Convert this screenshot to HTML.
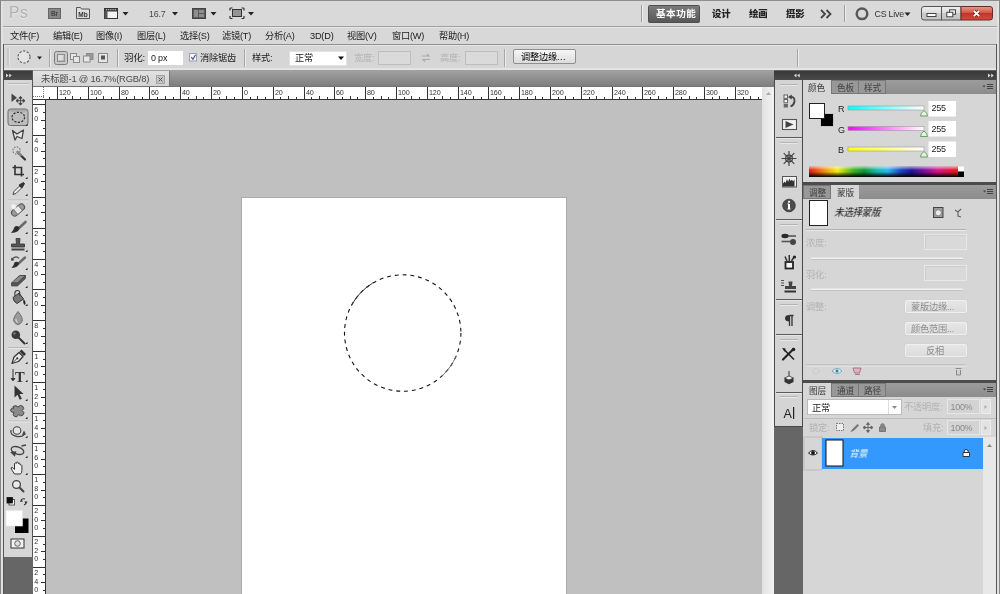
<!DOCTYPE html>
<html><head><meta charset="utf-8"><title>Photoshop</title>
<style>
*{box-sizing:border-box;margin:0;padding:0}
html,body{width:1000px;height:594px;overflow:hidden;background:#666}
body{font-family:"Liberation Sans","Noto Sans CJK SC",sans-serif;font-size:9px;color:#111;position:relative}
.a{position:absolute}
.t{position:absolute;white-space:nowrap;line-height:12px;height:12px;letter-spacing:-0.2px}
.dis{color:#b2b2b2 !important}
.o{top:52px;font-size:9.200px;color:#1a1a1a}
.p{font-size:9.200px}
.bd{font-weight:bold}
.btn.g{border-color:#f0f0f0;background:linear-gradient(#e6e6e6,#dcdcdc);box-shadow:0 0 0 .5px #cfcfcf}
.m{top:30px;font-size:9.200px;color:#1a1a1a}
.sep{position:absolute;width:2px;border-left:1px solid #a6a6a6;border-right:1px solid #ececec}
.box{position:absolute;border:1px solid #bdbdbd;background:#dadada}
.btn{position:absolute;border:1px solid #8e8e8e;border-radius:2px;background:linear-gradient(#f6f6f6,#dcdcdc);text-align:center}
svg{overflow:visible}
svg.a,.t{will-change:transform}
</style></head><body>

<!-- ===== application bar ===== -->
<div class="a" id="appbar" style="left:0;top:0;width:1000px;height:26px;background:#d9d9d9;border-top:1px solid #8e8e8e"></div>
<div class="a" style="left:0;top:26px;width:1000px;height:1px;background:#a0a0a0"></div>
<!-- ===== menu bar ===== -->
<div class="a" id="menubar" style="left:0;top:27px;width:1000px;height:17px;background:#d8d8d8;border-top:1px solid #e6e6e6"></div>
<div class="a" style="left:0;top:44px;width:1000px;height:1px;background:#8e8e8e"></div>
<!-- ===== options bar ===== -->
<div class="a" id="optbar" style="left:0;top:45px;width:1000px;height:25px;background:#d6d6d6;border-top:1px solid #e6e6e6;border-bottom:2px solid #e4e4e4"></div>

<!-- app bar content -->
<div class="t" style="left:9px;top:2.500px;font-size:15.600px;line-height:20px;height:20px;color:#b0b0b0;text-shadow:0 1px 0 #ececec;letter-spacing:0.700px">Ps</div>
<svg class="a" style="left:0;top:0" width="1000" height="46" viewBox="0 0 1000 46">
 <!-- Br -->
 <rect x="48.500" y="8.500" width="12" height="10" fill="#878787" stroke="#666"/>
 <text x="54.5" y="16.4" font-size="6.5" font-weight="bold" text-anchor="middle" fill="#444" font-family="Liberation Sans">Br</text>
 <!-- Mb -->
 <path d="M76.500 18.500V7.500h4l1 1.500h8V18.500z" fill="#dedede" stroke="#555"/>
 <text x="83" y="16.600" font-size="6.5" font-weight="bold" text-anchor="middle" fill="#333" font-family="Liberation Sans">Mb</text>
 <!-- screen/window icon -->
 <rect x="104.500" y="8.500" width="13" height="10" fill="#f2f2f2" stroke="#333"/>
 <rect x="104.500" y="8.500" width="13" height="2.500" fill="#444" stroke="#333"/>
 <rect x="104.500" y="11" width="3" height="7.500" fill="#555"/><path d="M106 9.700h11" stroke="#ddd" stroke-width="1" stroke-dasharray="1 1.200"/>
 <path d="M122.500 12h6l-3 3.500z" fill="#222"/>
 <!-- zoom -->
 <text x="149" y="17" font-size="8.800" fill="#4a4a4a" font-family="Liberation Sans" letter-spacing="-0.2">16.7</text>
 <path d="M172 12h6l-3 3.500z" fill="#222"/>
 <!-- arrange docs -->
 <rect x="192.500" y="8.500" width="13" height="10" fill="#5a5a5a" stroke="#444"/>
 <rect x="194" y="10" width="4" height="7" fill="#8e8e8e"/><rect x="199" y="10" width="5" height="3" fill="#8e8e8e"/><rect x="199" y="14" width="5" height="3" fill="#8e8e8e"/>
 <path d="M210.500 12h6l-3 3.500z" fill="#222"/>
 <!-- screen mode -->
 <rect x="232.500" y="9.500" width="9" height="7" fill="#949494" stroke="#333"/>
 <path d="M230 8h2.500M230 8v2.500M244 8h-2.500M244 8v2.500M230 18.500h2.500M230 18.500v-2.500M244 18.500h-2.500M244 18.500v-2.500" stroke="#333" stroke-width="1.200" fill="none"/>
 <path d="M248 12h6l-3 3.500z" fill="#222"/>
 <!-- separators -->
 <rect x="641" y="5" width="1" height="17" fill="#9c9c9c"/><rect x="642" y="5" width="1" height="17" fill="#ededed"/>
 <rect x="844" y="5" width="1" height="17" fill="#9c9c9c"/><rect x="845" y="5" width="1" height="17" fill="#ededed"/>
 <!-- workspace button -->
 <defs><linearGradient id="wsb" x1="0" y1="0" x2="0" y2="1"><stop offset="0" stop-color="#7c7c7c"/><stop offset="1" stop-color="#565656"/></linearGradient></defs><rect x="648.500" y="5.500" width="51" height="17" rx="1" fill="url(#wsb)" stroke="#4e4e4e"/>
 <!-- >> -->
 <path d="M821 10l4 4-4 4M826.500 10l4 4-4 4" stroke="#444" stroke-width="1.800" fill="none"/>
 <!-- CS Live -->
 <circle cx="862" cy="13.800" r="5.300" fill="none" stroke="#585858" stroke-width="2.500"/>
 <text x="874.500" y="17.200" font-size="8.900" fill="#333" font-family="Liberation Sans" letter-spacing="-0.25">CS Live</text>
 <path d="M904.500 12.500h6l-3 3.500z" fill="#222"/>
 <!-- window buttons -->
 <defs><linearGradient id="wb" x1="0" y1="0" x2="0" y2="1"><stop offset="0" stop-color="#f0f0f0"/><stop offset=".45" stop-color="#dcdcdc"/><stop offset=".5" stop-color="#cacaca"/><stop offset="1" stop-color="#c4c4c4"/></linearGradient>
 <linearGradient id="wc" x1="0" y1="0" x2="0" y2="1"><stop offset="0" stop-color="#e89a8c"/><stop offset=".45" stop-color="#d4584a"/><stop offset=".5" stop-color="#c43226"/><stop offset="1" stop-color="#d24e3c"/></linearGradient></defs>
 <path d="M924 6.500h17.500v13.500h-17.500a2.500 2.500 0 0 1-2.500-2.500v-8.500a2.500 2.500 0 0 1 2.500-2.500z" fill="url(#wb)" stroke="#555"/>
 <rect x="941.500" y="6.500" width="19.500" height="13.500" fill="url(#wb)" stroke="#555"/>
 <path d="M961 6.500h29a2.500 2.500 0 0 1 2.500 2.500v8.500a2.500 2.500 0 0 1-2.500 2.500h-29z" fill="url(#wc)" stroke="#6a2a24"/>
 <rect x="927" y="13.500" width="9" height="3" fill="#fff" stroke="#444"/>
 <rect x="949.500" y="9.800" width="6" height="4.500" fill="#eee" stroke="#444"/><rect x="946.800" y="12.300" width="6" height="4.500" fill="#fff" stroke="#444"/>
 <path d="M973.800 10.800l5.400 5.400M979.200 10.800l-5.400 5.400" stroke="#5a2a26" stroke-width="3.200"/><path d="M973.800 10.800l5.400 5.400M979.200 10.800l-5.400 5.400" stroke="#fff" stroke-width="1.900"/>
</svg>
<div class="t bd" style="left:655.500px;top:8px;font-size:9.600px;color:#fff;letter-spacing:0.500px">基本功能</div>
<div class="t bd" style="left:712px;top:8px;font-size:9.400px;color:#222"><b>设计</b></div>
<div class="t bd" style="left:749px;top:8px;font-size:9.400px;color:#222"><b>绘画</b></div>
<div class="t bd" style="left:786px;top:8px;font-size:9.400px;color:#222"><b>摄影</b></div>

<!-- menu bar content -->
<div class="t m" style="left:10px">文件(F)</div>
<div class="t m" style="left:53px">编辑(E)</div>
<div class="t m" style="left:96px">图像(I)</div>
<div class="t m" style="left:137px">图层(L)</div>
<div class="t m" style="left:180px">选择(S)</div>
<div class="t m" style="left:222px">滤镜(T)</div>
<div class="t m" style="left:265px">分析(A)</div>
<div class="t m" style="left:310px">3D(D)</div>
<div class="t m" style="left:347px">视图(V)</div>
<div class="t m" style="left:392px">窗口(W)</div>
<div class="t m" style="left:439px">帮助(H)</div>

<!-- ===== workspace ===== -->
<div class="a" id="ws" style="left:0;top:70px;width:1000px;height:524px;background:#666"></div>
<!-- left edge -->
<div class="a" style="left:0;top:0;width:1px;height:594px;background:#858585"></div>
<div class="a" style="left:1px;top:1px;width:2px;height:593px;background:#e2e2e2;z-index:6"></div>
<div class="a" style="left:3px;top:44px;width:1px;height:550px;background:#555;z-index:6"></div>

<!-- ===== toolbar ===== -->
<div class="a" id="tools" style="left:4px;top:71px;width:29px;height:486px;background:#d6d6d6;border-right:1px solid #555"></div>
<div class="a" style="left:4px;top:71px;width:28px;height:9px;background:linear-gradient(#3b3b3b,#4c4c4c)"></div>

<!-- ===== document window ===== -->
<div class="a" id="tabbar" style="left:33px;top:70px;width:741px;height:17px;background:linear-gradient(#a2a2a2,#7c7c7c)"></div>
<div class="a" id="tab" style="left:33px;top:71px;width:137px;height:16px;background:linear-gradient(#e2e2e2,#d2d2d2);border-right:1px solid #777"></div>
<div class="a" id="canvas" style="left:46px;top:100px;width:716px;height:494px;background:#c0c0c0"></div>
<div class="a" id="doc" style="left:241px;top:197px;width:326px;height:400px;background:#fff;border:1px solid #acacac"></div>
<div class="a" id="hruler" style="left:33px;top:86px;width:729px;height:14px;background:#fff;border-bottom:1px solid #333;border-top:1px solid #747474"></div>
<div class="a" id="vruler" style="left:33px;top:100px;width:13px;height:494px;background:#fff;border-right:1px solid #333"></div>
<div class="a" id="vscroll" style="left:762px;top:87px;width:12px;height:507px;background:linear-gradient(90deg,#e2e2e2,#f2f2f2)"></div>


<!-- options bar content -->
<svg class="a" style="left:0;top:0;z-index:5" width="1000" height="100" viewBox="0 0 1000 100">
 <rect x="7" y="48" width="2" height="18" fill="#c8c8c8"/><rect x="9" y="48" width="1" height="18" fill="#e4e4e4"/>
 <ellipse cx="24" cy="57" rx="6" ry="6" fill="#e4e4e4" stroke="#555" stroke-width="1.100" stroke-dasharray="2.200 1.600"/>
 <path d="M37 56.500h5l-2.500 3z" fill="#222"/>
 <!-- selection mode buttons -->
 <rect x="54.500" y="51.500" width="13" height="13" rx="2" fill="#c8c8c8" stroke="#7c7c7c"/>
 <rect x="57.500" y="54.500" width="7" height="7" fill="#dedede" stroke="#8a8a8a"/><path d="M58.500 61h5.500v-5.500" stroke="#9c9c9c" fill="none"/>
 <rect x="70.500" y="53.500" width="6" height="6" fill="#e6e6e6" stroke="#8a8a8a"/><rect x="73.500" y="56.500" width="6" height="6" fill="#e6e6e6" stroke="#8a8a8a"/>
 <rect x="86.500" y="53.500" width="6.500" height="6" fill="#9a9a9a" stroke="#8a8a8a"/><rect x="83.500" y="56" width="6.500" height="6" fill="#e6e6e6" stroke="#8a8a8a"/>
 <rect x="98.500" y="53.500" width="9" height="9" fill="#e6e6e6" stroke="#8a8a8a"/><rect x="101" y="55.500" width="4" height="4" fill="#555"/>
 <!-- checkbox -->
 <rect x="189.500" y="53.500" width="7" height="7.500" fill="#f6f6f6" stroke="#94a2b4"/>
 <path d="M191.300 57.200l1.600 2 2.700-4.500" stroke="#3c4f9a" stroke-width="1.100" fill="none"/>
 <!-- style dropdown arrow -->
 <path d="M338 56.500h6l-3 3.500z" fill="#111"/>
 <!-- swap icon -->
 <path d="M422 56h7l-2-2M430 59.500h-7l2 2" stroke="#a9a9a9" stroke-width="1.100" fill="none"/>
 <!-- ruler ticks -->
<rect x="49" y="97" width="1" height="2" fill="#333"/>
<rect x="57" y="87" width="1" height="12" fill="#333"/>
<text x="59" y="94.500" font-size="7.200" fill="#333" font-family="Liberation Sans" letter-spacing="-0.15">120</text>
<rect x="65" y="97" width="1" height="2" fill="#333"/>
<rect x="72" y="96" width="1" height="3" fill="#333"/>
<rect x="80" y="97" width="1" height="2" fill="#333"/>
<rect x="88" y="87" width="1" height="12" fill="#333"/>
<text x="90" y="94.500" font-size="7.200" fill="#333" font-family="Liberation Sans" letter-spacing="-0.15">100</text>
<rect x="96" y="97" width="1" height="2" fill="#333"/>
<rect x="103" y="96" width="1" height="3" fill="#333"/>
<rect x="111" y="97" width="1" height="2" fill="#333"/>
<rect x="119" y="87" width="1" height="12" fill="#333"/>
<text x="121" y="94.500" font-size="7.200" fill="#333" font-family="Liberation Sans" letter-spacing="-0.15">80</text>
<rect x="126" y="97" width="1" height="2" fill="#333"/>
<rect x="134" y="96" width="1" height="3" fill="#333"/>
<rect x="142" y="97" width="1" height="2" fill="#333"/>
<rect x="149" y="87" width="1" height="12" fill="#333"/>
<text x="151" y="94.500" font-size="7.200" fill="#333" font-family="Liberation Sans" letter-spacing="-0.15">60</text>
<rect x="157" y="97" width="1" height="2" fill="#333"/>
<rect x="165" y="96" width="1" height="3" fill="#333"/>
<rect x="173" y="97" width="1" height="2" fill="#333"/>
<rect x="180" y="87" width="1" height="12" fill="#333"/>
<text x="182" y="94.500" font-size="7.200" fill="#333" font-family="Liberation Sans" letter-spacing="-0.15">40</text>
<rect x="188" y="97" width="1" height="2" fill="#333"/>
<rect x="196" y="96" width="1" height="3" fill="#333"/>
<rect x="203" y="97" width="1" height="2" fill="#333"/>
<rect x="211" y="87" width="1" height="12" fill="#333"/>
<text x="213" y="94.500" font-size="7.200" fill="#333" font-family="Liberation Sans" letter-spacing="-0.15">20</text>
<rect x="219" y="97" width="1" height="2" fill="#333"/>
<rect x="226" y="96" width="1" height="3" fill="#333"/>
<rect x="234" y="97" width="1" height="2" fill="#333"/>
<rect x="242" y="87" width="1" height="12" fill="#333"/>
<text x="244" y="94.500" font-size="7.200" fill="#333" font-family="Liberation Sans" letter-spacing="-0.15">0</text>
<rect x="250" y="97" width="1" height="2" fill="#333"/>
<rect x="257" y="96" width="1" height="3" fill="#333"/>
<rect x="265" y="97" width="1" height="2" fill="#333"/>
<rect x="273" y="87" width="1" height="12" fill="#333"/>
<text x="275" y="94.500" font-size="7.200" fill="#333" font-family="Liberation Sans" letter-spacing="-0.15">20</text>
<rect x="280" y="97" width="1" height="2" fill="#333"/>
<rect x="288" y="96" width="1" height="3" fill="#333"/>
<rect x="296" y="97" width="1" height="2" fill="#333"/>
<rect x="304" y="87" width="1" height="12" fill="#333"/>
<text x="306" y="94.500" font-size="7.200" fill="#333" font-family="Liberation Sans" letter-spacing="-0.15">40</text>
<rect x="311" y="97" width="1" height="2" fill="#333"/>
<rect x="319" y="96" width="1" height="3" fill="#333"/>
<rect x="327" y="97" width="1" height="2" fill="#333"/>
<rect x="334" y="87" width="1" height="12" fill="#333"/>
<text x="336" y="94.500" font-size="7.200" fill="#333" font-family="Liberation Sans" letter-spacing="-0.15">60</text>
<rect x="342" y="97" width="1" height="2" fill="#333"/>
<rect x="350" y="96" width="1" height="3" fill="#333"/>
<rect x="357" y="97" width="1" height="2" fill="#333"/>
<rect x="365" y="87" width="1" height="12" fill="#333"/>
<text x="367" y="94.500" font-size="7.200" fill="#333" font-family="Liberation Sans" letter-spacing="-0.15">80</text>
<rect x="373" y="97" width="1" height="2" fill="#333"/>
<rect x="381" y="96" width="1" height="3" fill="#333"/>
<rect x="388" y="97" width="1" height="2" fill="#333"/>
<rect x="396" y="87" width="1" height="12" fill="#333"/>
<text x="398" y="94.500" font-size="7.200" fill="#333" font-family="Liberation Sans" letter-spacing="-0.15">100</text>
<rect x="404" y="97" width="1" height="2" fill="#333"/>
<rect x="411" y="96" width="1" height="3" fill="#333"/>
<rect x="419" y="97" width="1" height="2" fill="#333"/>
<rect x="427" y="87" width="1" height="12" fill="#333"/>
<text x="429" y="94.500" font-size="7.200" fill="#333" font-family="Liberation Sans" letter-spacing="-0.15">120</text>
<rect x="434" y="97" width="1" height="2" fill="#333"/>
<rect x="442" y="96" width="1" height="3" fill="#333"/>
<rect x="450" y="97" width="1" height="2" fill="#333"/>
<rect x="458" y="87" width="1" height="12" fill="#333"/>
<text x="460" y="94.500" font-size="7.200" fill="#333" font-family="Liberation Sans" letter-spacing="-0.15">140</text>
<rect x="465" y="97" width="1" height="2" fill="#333"/>
<rect x="473" y="96" width="1" height="3" fill="#333"/>
<rect x="481" y="97" width="1" height="2" fill="#333"/>
<rect x="488" y="87" width="1" height="12" fill="#333"/>
<text x="490" y="94.500" font-size="7.200" fill="#333" font-family="Liberation Sans" letter-spacing="-0.15">160</text>
<rect x="496" y="97" width="1" height="2" fill="#333"/>
<rect x="504" y="96" width="1" height="3" fill="#333"/>
<rect x="511" y="97" width="1" height="2" fill="#333"/>
<rect x="519" y="87" width="1" height="12" fill="#333"/>
<text x="521" y="94.500" font-size="7.200" fill="#333" font-family="Liberation Sans" letter-spacing="-0.15">180</text>
<rect x="527" y="97" width="1" height="2" fill="#333"/>
<rect x="535" y="96" width="1" height="3" fill="#333"/>
<rect x="542" y="97" width="1" height="2" fill="#333"/>
<rect x="550" y="87" width="1" height="12" fill="#333"/>
<text x="552" y="94.500" font-size="7.200" fill="#333" font-family="Liberation Sans" letter-spacing="-0.15">200</text>
<rect x="558" y="97" width="1" height="2" fill="#333"/>
<rect x="565" y="96" width="1" height="3" fill="#333"/>
<rect x="573" y="97" width="1" height="2" fill="#333"/>
<rect x="581" y="87" width="1" height="12" fill="#333"/>
<text x="583" y="94.500" font-size="7.200" fill="#333" font-family="Liberation Sans" letter-spacing="-0.15">220</text>
<rect x="589" y="97" width="1" height="2" fill="#333"/>
<rect x="596" y="96" width="1" height="3" fill="#333"/>
<rect x="604" y="97" width="1" height="2" fill="#333"/>
<rect x="612" y="87" width="1" height="12" fill="#333"/>
<text x="614" y="94.500" font-size="7.200" fill="#333" font-family="Liberation Sans" letter-spacing="-0.15">240</text>
<rect x="619" y="97" width="1" height="2" fill="#333"/>
<rect x="627" y="96" width="1" height="3" fill="#333"/>
<rect x="635" y="97" width="1" height="2" fill="#333"/>
<rect x="642" y="87" width="1" height="12" fill="#333"/>
<text x="644" y="94.500" font-size="7.200" fill="#333" font-family="Liberation Sans" letter-spacing="-0.15">260</text>
<rect x="650" y="97" width="1" height="2" fill="#333"/>
<rect x="658" y="96" width="1" height="3" fill="#333"/>
<rect x="666" y="97" width="1" height="2" fill="#333"/>
<rect x="673" y="87" width="1" height="12" fill="#333"/>
<text x="675" y="94.500" font-size="7.200" fill="#333" font-family="Liberation Sans" letter-spacing="-0.15">280</text>
<rect x="681" y="97" width="1" height="2" fill="#333"/>
<rect x="689" y="96" width="1" height="3" fill="#333"/>
<rect x="696" y="97" width="1" height="2" fill="#333"/>
<rect x="704" y="87" width="1" height="12" fill="#333"/>
<text x="706" y="94.500" font-size="7.200" fill="#333" font-family="Liberation Sans" letter-spacing="-0.15">300</text>
<rect x="712" y="97" width="1" height="2" fill="#333"/>
<rect x="719" y="96" width="1" height="3" fill="#333"/>
<rect x="727" y="97" width="1" height="2" fill="#333"/>
<rect x="735" y="87" width="1" height="12" fill="#333"/>
<text x="737" y="94.500" font-size="7.200" fill="#333" font-family="Liberation Sans" letter-spacing="-0.15">320</text>
<rect x="743" y="97" width="1" height="2" fill="#333"/>
<rect x="750" y="96" width="1" height="3" fill="#333"/>
<rect x="758" y="97" width="1" height="2" fill="#333"/>
</svg>
<div class="sep" style="left:49px;top:49px;height:18px"></div>
<div class="sep" style="left:117px;top:49px;height:18px"></div>
<div class="sep" style="left:244px;top:49px;height:18px"></div>
<div class="sep" style="left:504px;top:49px;height:18px"></div>
<div class="sep" style="left:797px;top:49px;height:18px"></div>
<div class="t o" style="left:124px;font-size:9.500px">羽化:</div>
<div class="a" style="left:148px;top:51px;width:35px;height:14px;background:#fff"></div>
<div class="t o" style="left:151px;font-size:9px">0 px</div>
<div class="t o" style="left:199.500px">消除锯齿</div>
<div class="t o" style="left:252px">样式:</div>
<div class="a" style="left:289px;top:51px;width:58px;height:15px;background:#fff;border:1px solid #e2e2e2"></div>
<div class="t o" style="left:295px">正常</div>
<div class="t o dis" style="left:354px">宽度:</div>
<div class="box" style="left:378px;top:51px;width:33px;height:14px"></div>
<div class="t o dis" style="left:440px">高度:</div>
<div class="box" style="left:465px;top:51px;width:33px;height:14px"></div>
<div class="btn" style="left:513px;top:49px;width:63px;height:15px"></div>
<div class="t o" style="left:521px;top:51px;color:#000">调整边缘<span style="letter-spacing:.5px">...</span></div>
<!-- tab -->
<div class="t" style="left:41px;top:73px;font-size:9.400px;color:#4a4a4a">未标题-1 @ 16.7%(RGB/8)</div>
<svg class="a" style="left:156px;top:75px" width="10" height="10"><rect x=".5" y=".5" width="8" height="8" fill="#c6c6c6" stroke="#a2a2a2"/><path d="M2.500 2.500l4 4M6.500 2.500l-4 4" stroke="#555" stroke-width="1"/></svg>
<!-- vertical ruler -->
<svg class="a" style="left:0;top:0" width="50" height="594" viewBox="0 0 50 594">
<rect x="33" y="104" width="12" height="1" fill="#333"/>
<text x="34.300" y="112.3" font-size="7.200" fill="#333" font-family="Liberation Sans">6</text>
<text x="34.300" y="120.6" font-size="7.200" fill="#333" font-family="Liberation Sans">0</text>
<rect x="43" y="112" width="2" height="1" fill="#333"/>
<rect x="41" y="120" width="4" height="1" fill="#333"/>
<rect x="43" y="128" width="2" height="1" fill="#333"/>
<rect x="33" y="135" width="12" height="1" fill="#333"/>
<text x="34.300" y="143.3" font-size="7.200" fill="#333" font-family="Liberation Sans">4</text>
<text x="34.300" y="151.6" font-size="7.200" fill="#333" font-family="Liberation Sans">0</text>
<rect x="43" y="143" width="2" height="1" fill="#333"/>
<rect x="41" y="151" width="4" height="1" fill="#333"/>
<rect x="43" y="158" width="2" height="1" fill="#333"/>
<rect x="33" y="166" width="12" height="1" fill="#333"/>
<text x="34.300" y="174.3" font-size="7.200" fill="#333" font-family="Liberation Sans">2</text>
<text x="34.300" y="182.6" font-size="7.200" fill="#333" font-family="Liberation Sans">0</text>
<rect x="43" y="174" width="2" height="1" fill="#333"/>
<rect x="41" y="181" width="4" height="1" fill="#333"/>
<rect x="43" y="189" width="2" height="1" fill="#333"/>
<rect x="33" y="197" width="12" height="1" fill="#333"/>
<text x="34.300" y="205.3" font-size="7.200" fill="#333" font-family="Liberation Sans">0</text>
<rect x="43" y="205" width="2" height="1" fill="#333"/>
<rect x="41" y="212" width="4" height="1" fill="#333"/>
<rect x="43" y="220" width="2" height="1" fill="#333"/>
<rect x="33" y="228" width="12" height="1" fill="#333"/>
<text x="34.300" y="236.3" font-size="7.200" fill="#333" font-family="Liberation Sans">2</text>
<text x="34.300" y="244.6" font-size="7.200" fill="#333" font-family="Liberation Sans">0</text>
<rect x="43" y="235" width="2" height="1" fill="#333"/>
<rect x="41" y="243" width="4" height="1" fill="#333"/>
<rect x="43" y="251" width="2" height="1" fill="#333"/>
<rect x="33" y="259" width="12" height="1" fill="#333"/>
<text x="34.300" y="267.3" font-size="7.200" fill="#333" font-family="Liberation Sans">4</text>
<text x="34.300" y="275.6" font-size="7.200" fill="#333" font-family="Liberation Sans">0</text>
<rect x="43" y="266" width="2" height="1" fill="#333"/>
<rect x="41" y="274" width="4" height="1" fill="#333"/>
<rect x="43" y="282" width="2" height="1" fill="#333"/>
<rect x="33" y="289" width="12" height="1" fill="#333"/>
<text x="34.300" y="297.3" font-size="7.200" fill="#333" font-family="Liberation Sans">6</text>
<text x="34.300" y="305.6" font-size="7.200" fill="#333" font-family="Liberation Sans">0</text>
<rect x="43" y="297" width="2" height="1" fill="#333"/>
<rect x="41" y="305" width="4" height="1" fill="#333"/>
<rect x="43" y="312" width="2" height="1" fill="#333"/>
<rect x="33" y="320" width="12" height="1" fill="#333"/>
<text x="34.300" y="328.3" font-size="7.200" fill="#333" font-family="Liberation Sans">8</text>
<text x="34.300" y="336.6" font-size="7.200" fill="#333" font-family="Liberation Sans">0</text>
<rect x="43" y="328" width="2" height="1" fill="#333"/>
<rect x="41" y="336" width="4" height="1" fill="#333"/>
<rect x="43" y="343" width="2" height="1" fill="#333"/>
<rect x="33" y="351" width="12" height="1" fill="#333"/>
<text x="34.300" y="359.3" font-size="7.200" fill="#333" font-family="Liberation Sans">1</text>
<text x="34.300" y="367.6" font-size="7.200" fill="#333" font-family="Liberation Sans">0</text>
<text x="34.300" y="375.9" font-size="7.200" fill="#333" font-family="Liberation Sans">0</text>
<rect x="43" y="359" width="2" height="1" fill="#333"/>
<rect x="41" y="366" width="4" height="1" fill="#333"/>
<rect x="43" y="374" width="2" height="1" fill="#333"/>
<rect x="33" y="382" width="12" height="1" fill="#333"/>
<text x="34.300" y="390.3" font-size="7.200" fill="#333" font-family="Liberation Sans">1</text>
<text x="34.300" y="398.6" font-size="7.200" fill="#333" font-family="Liberation Sans">2</text>
<text x="34.300" y="406.9" font-size="7.200" fill="#333" font-family="Liberation Sans">0</text>
<rect x="43" y="389" width="2" height="1" fill="#333"/>
<rect x="41" y="397" width="4" height="1" fill="#333"/>
<rect x="43" y="405" width="2" height="1" fill="#333"/>
<rect x="33" y="413" width="12" height="1" fill="#333"/>
<text x="34.300" y="421.3" font-size="7.200" fill="#333" font-family="Liberation Sans">1</text>
<text x="34.300" y="429.6" font-size="7.200" fill="#333" font-family="Liberation Sans">4</text>
<text x="34.300" y="437.9" font-size="7.200" fill="#333" font-family="Liberation Sans">0</text>
<rect x="43" y="420" width="2" height="1" fill="#333"/>
<rect x="41" y="428" width="4" height="1" fill="#333"/>
<rect x="43" y="436" width="2" height="1" fill="#333"/>
<rect x="33" y="443" width="12" height="1" fill="#333"/>
<text x="34.300" y="451.3" font-size="7.200" fill="#333" font-family="Liberation Sans">1</text>
<text x="34.300" y="459.6" font-size="7.200" fill="#333" font-family="Liberation Sans">6</text>
<text x="34.300" y="467.9" font-size="7.200" fill="#333" font-family="Liberation Sans">0</text>
<rect x="43" y="451" width="2" height="1" fill="#333"/>
<rect x="41" y="459" width="4" height="1" fill="#333"/>
<rect x="43" y="466" width="2" height="1" fill="#333"/>
<rect x="33" y="474" width="12" height="1" fill="#333"/>
<text x="34.300" y="482.3" font-size="7.200" fill="#333" font-family="Liberation Sans">1</text>
<text x="34.300" y="490.6" font-size="7.200" fill="#333" font-family="Liberation Sans">8</text>
<text x="34.300" y="498.9" font-size="7.200" fill="#333" font-family="Liberation Sans">0</text>
<rect x="43" y="482" width="2" height="1" fill="#333"/>
<rect x="41" y="490" width="4" height="1" fill="#333"/>
<rect x="43" y="497" width="2" height="1" fill="#333"/>
<rect x="33" y="505" width="12" height="1" fill="#333"/>
<text x="34.300" y="513.3" font-size="7.200" fill="#333" font-family="Liberation Sans">2</text>
<text x="34.300" y="521.6" font-size="7.200" fill="#333" font-family="Liberation Sans">0</text>
<text x="34.300" y="529.9" font-size="7.200" fill="#333" font-family="Liberation Sans">0</text>
<rect x="43" y="513" width="2" height="1" fill="#333"/>
<rect x="41" y="520" width="4" height="1" fill="#333"/>
<rect x="43" y="528" width="2" height="1" fill="#333"/>
<rect x="33" y="536" width="12" height="1" fill="#333"/>
<text x="34.300" y="544.3" font-size="7.200" fill="#333" font-family="Liberation Sans">2</text>
<text x="34.300" y="552.6" font-size="7.200" fill="#333" font-family="Liberation Sans">2</text>
<text x="34.300" y="560.9" font-size="7.200" fill="#333" font-family="Liberation Sans">0</text>
<rect x="43" y="544" width="2" height="1" fill="#333"/>
<rect x="41" y="551" width="4" height="1" fill="#333"/>
<rect x="43" y="559" width="2" height="1" fill="#333"/>
<rect x="33" y="567" width="12" height="1" fill="#333"/>
<text x="34.300" y="575.3" font-size="7.200" fill="#333" font-family="Liberation Sans">2</text>
<text x="34.300" y="583.6" font-size="7.200" fill="#333" font-family="Liberation Sans">4</text>
<text x="34.300" y="591.9" font-size="7.200" fill="#333" font-family="Liberation Sans">0</text>
<rect x="43" y="574" width="2" height="1" fill="#333"/>
<rect x="41" y="582" width="4" height="1" fill="#333"/>
<rect x="43" y="590" width="2" height="1" fill="#333"/>
 <path d="M33 96.500h12M43.500 87v12" stroke="#777" stroke-width="1" stroke-dasharray="1 1"/>
</svg>
<!-- scroll arrow -->
<svg class="a" style="left:762px;top:87px" width="13" height="13"><path d="M4 8l2.500-3 2.500 3z" fill="#a8a8a8"/></svg>

<!-- ===== right dock ===== -->
<div class="a" id="dockhdr" style="left:774px;top:71px;width:222px;height:9px;background:linear-gradient(#383838,#4a4a4a)"></div>
<div class="a" id="strip" style="left:774px;top:80px;width:29px;height:347px;background:#d4d4d4;border-left:1px solid #4a4a4a;border-right:1px solid #4a4a4a;border-bottom:1px solid #4a4a4a"></div>
<div class="a" id="panels" style="left:803px;top:80px;width:193px;height:514px;background:#d6d6d6"></div>
<div class="a" style="left:996px;top:44px;width:1px;height:550px;background:#555;z-index:6"></div>
<div class="a" style="left:997px;top:1px;width:2px;height:593px;background:#e2e2e2;z-index:6"></div>
<div class="a" style="left:999px;top:0;width:1px;height:594px;background:#858585;z-index:6"></div>


<!-- selection circle -->
<svg class="a" style="left:0;top:0" width="1000" height="594" viewBox="0 0 1000 594">
 <circle cx="402.7" cy="333" r="58.2" fill="none" stroke="#111" stroke-width="1.100" stroke-dasharray="3.900 3.920"/>
 <path d="M351.8 304.8A58.2 58.2 0 0 1 372.7 283.1" fill="none" stroke="#333" stroke-width="1"/>
 <path d="M456.3 355.7A58.2 58.2 0 0 1 441.6 376.3" fill="none" stroke="#666" stroke-width=".9"/>
</svg>

<!-- ===== right dock content ===== -->
<svg class="a" style="left:0;top:0" width="1000" height="594" viewBox="0 0 1000 594">
 <!-- header arrows -->
 <path d="M796.500 73.500v4l-2.500-2zM799.700 73.500v4l-2.500-2z" fill="#ddd"/>
 <path d="M988 73.500v4l2.500-2zM991.200 73.500v4l2.500-2z" fill="#ddd"/>
 <path d="M6 73.500v4l2.500-2zM9.200 73.500v4l2.500-2z" fill="#ddd"/>
 <!-- panel tab rows -->
 <rect x="803" y="80" width="193" height="14" fill="url(#tabg)"/>
 <rect x="803" y="185" width="193" height="14" fill="url(#tabg)"/>
 <rect x="803" y="383" width="193" height="14" fill="url(#tabg)"/>
 <defs><linearGradient id="tabg" x1="0" y1="0" x2="0" y2="1"><stop offset="0" stop-color="#9c9c9c"/><stop offset="1" stop-color="#8c8c8c"/></linearGradient>
 <linearGradient id="gR" x1="0" y1="0" x2="1" y2="0"><stop offset="0" stop-color="#00ffff"/><stop offset="1" stop-color="#fff"/></linearGradient>
 <linearGradient id="gG" x1="0" y1="0" x2="1" y2="0"><stop offset="0" stop-color="#ff00ff"/><stop offset="1" stop-color="#fff"/></linearGradient>
 <linearGradient id="gB" x1="0" y1="0" x2="1" y2="0"><stop offset="0" stop-color="#ffff00"/><stop offset="1" stop-color="#fff"/></linearGradient>
 <linearGradient id="spec" x1="0" y1="0" x2="1" y2="0"><stop offset="0" stop-color="#e81414"/><stop offset=".1" stop-color="#f08a10"/><stop offset=".19" stop-color="#f4ec18"/><stop offset=".3" stop-color="#38b020"/><stop offset=".37" stop-color="#0f9434"/><stop offset=".46" stop-color="#18b8b0"/><stop offset=".53" stop-color="#28b4f0"/><stop offset=".62" stop-color="#1c40c0"/><stop offset=".69" stop-color="#1c1496"/><stop offset=".78" stop-color="#80109a"/><stop offset=".86" stop-color="#d01488"/><stop offset="1" stop-color="#e81414"/></linearGradient>
 <linearGradient id="specv" x1="0" y1="0" x2="0" y2="1"><stop offset="0" stop-color="#fff" stop-opacity=".6"/><stop offset=".35" stop-color="#fff" stop-opacity="0"/><stop offset=".5" stop-color="#000" stop-opacity="0"/><stop offset="1" stop-color="#000" stop-opacity="1"/></linearGradient>
 </defs>
 <!-- dark separators between panels -->
 <rect x="803" y="182" width="193" height="3" fill="#4c4c4c"/>
 <rect x="803" y="380" width="193" height="3" fill="#4c4c4c"/>
 <!-- tabs: color panel -->
 <rect x="803" y="80" width="28" height="15" fill="#d6d6d6"/>
 <rect x="831.500" y="80.500" width="27" height="13" fill="#989898" stroke="#787878"/>
 <rect x="858.500" y="80.500" width="27" height="13" fill="#989898" stroke="#787878"/>
 <!-- tabs: mask panel -->
 <rect x="803.500" y="185.500" width="27" height="13" fill="#989898" stroke="#787878"/>
 <rect x="831" y="185" width="28" height="15" fill="#d6d6d6"/>
 <!-- tabs: layers -->
 <rect x="803" y="383" width="28" height="15" fill="#d6d6d6"/>
 <rect x="831.500" y="383.500" width="27" height="13" fill="#989898" stroke="#787878"/>
 <rect x="858.500" y="383.500" width="27" height="13" fill="#989898" stroke="#787878"/>
 <!-- panel menu icons -->
 <g fill="#444"><path d="M982.500 85.500h3l-1.500 2z"/><rect x="987" y="84" width="6" height="1"/><rect x="987" y="86" width="6" height="1"/><rect x="987" y="88" width="6" height="1"/>
 <path d="M983 190.500h3l-1.500 2z"/><rect x="987" y="189" width="6" height="1"/><rect x="987" y="191" width="6" height="1"/><rect x="987" y="193" width="6" height="1"/>
 <path d="M983 388.500h3l-1.500 2z"/><rect x="987" y="387" width="6" height="1"/><rect x="987" y="389" width="6" height="1"/><rect x="987" y="391" width="6" height="1"/></g>
 <!-- color panel: swatches -->
 <rect x="821" y="114" width="12" height="12" fill="#000"/>
 <rect x="820.500" y="113.500" width="13" height="13" fill="none" stroke="#c4c4c4" stroke-width=".8"/>
 <rect x="809.500" y="103.500" width="15" height="15" fill="#fff" stroke="#222"/>
 <!-- sliders -->
 <rect x="848" y="106" width="76" height="4" fill="url(#gR)" stroke="#9a9a9a" stroke-width=".6"/>
 <rect x="848" y="126.500" width="76" height="4" fill="url(#gG)" stroke="#9a9a9a" stroke-width=".6"/>
 <rect x="848" y="147" width="76" height="4" fill="url(#gB)" stroke="#9a9a9a" stroke-width=".6"/>
 <g fill="#e4f2df" stroke="#5c9a58" stroke-width=".9"><path d="M924 110.500q3.500 2.500 3.500 5.500h-7q0-3 3.500-5.500z"/><path d="M924 131q3.500 2.500 3.500 5.500h-7q0-3 3.500-5.500z"/><path d="M924 151.500q3.500 2.500 3.500 5.500h-7q0-3 3.500-5.500z"/></g>
 <rect x="928.500" y="101" width="27.500" height="15.500" fill="#fff"/><rect x="928.500" y="121" width="27.500" height="15.500" fill="#fff"/><rect x="928.500" y="141.500" width="27.500" height="15.500" fill="#fff"/>
 <g font-family="Liberation Sans" font-size="9" fill="#222"><text x="838" y="112">R</text><text x="838" y="132.500">G</text><text x="838" y="153">B</text>
 <text x="931.500" y="111.300" letter-spacing="-0.3">255</text><text x="931.500" y="131.500" letter-spacing="-0.3">255</text><text x="931.500" y="152" letter-spacing="-0.3">255</text></g>
 <!-- spectrum -->
 <rect x="809" y="166.500" width="149" height="10.500" fill="url(#spec)"/><rect x="809" y="166.500" width="149" height="10.500" fill="url(#specv)"/>
 <rect x="958" y="166.500" width="6" height="5" fill="#fff"/><rect x="958" y="171.500" width="6" height="5.500" fill="#000"/>
 <!-- mask panel -->
 <rect x="809.500" y="200.500" width="18" height="25" fill="#fff" stroke="#222"/>
 <rect x="933.500" y="207.500" width="9.500" height="10" fill="#9c9c9c" stroke="#444"/><circle cx="938.300" cy="212.800" r="3" fill="#ececec" stroke="#666" stroke-width=".6"/>
 <path d="M955 210l3 2 3-3M958 212v4l3 1" stroke="#666" stroke-width="1.200" fill="none"/>
 <rect x="806" y="229" width="160" height="1" fill="#b2b2b2"/><rect x="806" y="230" width="160" height="1" fill="#e9e9e9"/>
 <rect x="811" y="257.500" width="152" height="1.500" fill="#f0f0f0"/><rect x="811" y="259" width="152" height="1" fill="#c4c4c4"/>
 <rect x="811" y="288.500" width="152" height="1.500" fill="#f0f0f0"/><rect x="811" y="290" width="152" height="1" fill="#c4c4c4"/>
 <rect x="806" y="364.500" width="160" height="1" fill="#b2b2b2"/><rect x="806" y="365.500" width="160" height="1" fill="#e9e9e9"/>
 <!-- mask bottom icons -->
 <circle cx="816" cy="371" r="3" fill="none" stroke="#c2c2c2" stroke-width="1" stroke-dasharray="1.500 1"/>
 <path d="M832 371q5-5 10 0q-5 5-10 0z" fill="#dff0f6" stroke="#6aa3b8" stroke-width=".9"/><circle cx="837" cy="371" r="1.500" fill="#3d7f99"/>
 <path d="M853 368h8l-1.500 5h-5zM855 374.500h5" fill="#d9b6c0" stroke="#a96b7c" stroke-width=".9"/>
 <path d="M955.500 368.500h6M956.500 370v5h4v-5" stroke="#8a8a8a" stroke-width="1" fill="#d0d0d0"/>
 <!-- layers panel -->
 <rect x="807.500" y="399.500" width="94" height="15" fill="#fff" stroke="#b9b9b9"/>
 <rect x="888" y="400" width="1" height="14" fill="#ddd"/>
 <path d="M892 406h5l-2.500 3z" fill="#888"/>
 <rect x="947.500" y="399.500" width="32" height="14" fill="#d3d3d3" stroke="#e6e6e6"/><rect x="981.500" y="399.500" width="9" height="14" fill="#e2e2e2" stroke="#ececec"/><path d="M984.500 405v4l2.500-2z" fill="#aaa"/>
 <rect x="947.500" y="420.500" width="32" height="14" fill="#d3d3d3" stroke="#e6e6e6"/><rect x="981.500" y="420.500" width="9" height="14" fill="#e2e2e2" stroke="#ececec"/><path d="M984.500 426v4l2.500-2z" fill="#aaa"/>
 <rect x="804" y="418" width="192" height="1" fill="#bdbdbd"/>
 <g font-family="Liberation Sans" font-size="9" fill="#8a8a8a" letter-spacing="-0.3"><text x="950.500" y="410">100%</text><text x="950.500" y="431">100%</text></g>
 <!-- lock icons -->
 <rect x="836.500" y="423.500" width="7" height="7" fill="#eee" stroke="#777" stroke-dasharray="1.500 1"/>
 <path d="M850 432.500l2.500-3.500 5-5 1.500 1.500-5 5z" fill="#777"/>
 <path d="M868 423v9M863.500 427.500h9M868 422.500l-1.500 2h3zM868 432.500l-1.500-2h3zM863 427.500l2-1.500v3zM873 427.500l-2-1.500v3z" stroke="#666" stroke-width="1" fill="#666"/>
 <path d="M879.500 431.500v-4.500h6v4.500zM880.700 427v-1.500a1.800 1.800 0 0 1 3.600 0v1.500" fill="#8a8a8a" stroke="#777" stroke-width="1"/>
 <!-- layer row -->
 <rect x="804" y="437" width="18" height="33" fill="#d6d6d6" stroke="#b5b5b5" stroke-width=".8"/>
 <rect x="822" y="438" width="161" height="31" fill="#3399ff"/>
 <rect x="826" y="440" width="17" height="26" fill="#fff" stroke="#111" stroke-width="1"/>
 <path d="M808.500 453q4.500-5 9 0q-4.500 4-9 0z" fill="#fff" stroke="#222" stroke-width="1"/><circle cx="813" cy="452.800" r="1.900" fill="#111"/>
 <path d="M963 456.500v-4h6.500v4zM964.300 452.500v-1.200a1.900 1.900 0 0 1 3.800 0v1.200" fill="#fff" stroke="#333" stroke-width="1"/>
 <!-- layer scrollbar -->
 <rect x="983" y="437" width="13" height="157" fill="#e8e8e8"/><path d="M987 447l2.500-3 2.500 3z" fill="#8a8a8a"/>
</svg>
<div class="t p" style="left:808px;top:82px;font-size:8.700px;color:#3a3a3a">颜色</div>
<div class="t p" style="left:836.500px;top:82px;font-size:8.700px;color:#404040">色板</div>
<div class="t p" style="left:863.500px;top:82px;font-size:8.700px;color:#404040">样式</div>
<div class="t p" style="left:808.500px;top:186.500px;font-size:8.700px;color:#404040">调整</div>
<div class="t p" style="left:836.500px;top:186.500px;font-size:8.700px;color:#3a3a3a">蒙版</div>
<div class="t p" style="left:808.500px;top:384.500px;font-size:8.700px;color:#3a3a3a">图层</div>
<div class="t p" style="left:836.500px;top:384.500px;font-size:8.700px;color:#404040">通道</div>
<div class="t p" style="left:863.500px;top:384.500px;font-size:8.700px;color:#404040">路径</div>
<div class="t p" style="left:835px;top:207px;font-size:9.400px;color:#111;transform:skewX(-14deg)">未选择蒙版</div>
<div class="t p dis" style="left:806px;top:237px">浓度:</div>
<div class="box" style="left:924px;top:234px;width:43px;height:16px;border-color:#e8e8e8;background:#d9d9d9;box-shadow:inset 1px 1px 0 #cdcdcd"></div>
<div class="t p dis" style="left:806px;top:269px">羽化:</div>
<div class="box" style="left:924px;top:265px;width:43px;height:16px;border-color:#e8e8e8;background:#d9d9d9;box-shadow:inset 1px 1px 0 #cdcdcd"></div>
<div class="t p dis" style="left:806px;top:301px">调整:</div>
<div class="btn g" style="left:905px;top:300px;width:62px;height:13px"></div>
<div class="btn g" style="left:905px;top:322px;width:62px;height:13px"></div>
<div class="btn g" style="left:905px;top:344px;width:62px;height:13px"></div>
<div class="t p" style="left:911px;top:301px;color:#8c8c8c">蒙版边缘...</div>
<div class="t p" style="left:911px;top:323px;color:#8c8c8c">颜色范围...</div>
<div class="t p" style="left:926px;top:345px;color:#8c8c8c">反相</div>
<div class="t p" style="left:812px;top:402px;color:#222">正常</div>
<div class="t p dis" style="left:904px;top:401px">不透明度:</div>
<div class="t p dis" style="left:809px;top:422px">锁定:</div>
<div class="t p dis" style="left:923px;top:422px">填充:</div>
<div class="t p" style="left:850px;top:448px;color:#fff;transform:skewX(-14deg)">背景</div>


<!-- ===== toolbar icons ===== -->
<svg class="a" style="left:0;top:0" width="40" height="594" viewBox="0 0 40 594">
 <rect x="8" y="83" width="21" height="1" fill="#b9b9b9"/><rect x="8" y="84" width="21" height="1" fill="#e6e6e6"/>
 <!-- move -->
 <path d="M11.500 93.500v8.500l5.500-4.300z" fill="#444"/>
 <path d="M20.500 97v7.500M16.800 100.700h7.500M20.500 96.300l-1.600 1.900h3.200zM20.500 105.200l-1.600-1.900h3.200zM16 100.700l1.900-1.600v3.200zM25 100.700l-1.900-1.600v3.200z" stroke="#444" stroke-width=".9" fill="#444"/>
 <!-- selected marquee -->
 <rect x="8" y="109" width="20" height="16.500" rx="2.500" fill="#bdbdbd" stroke="#6d6d6d" stroke-width="1"/>
 <rect x="9" y="110" width="18" height="1.500" rx="1" fill="#a8a8a8"/>
 <ellipse cx="18.300" cy="117.300" rx="6.300" ry="5" fill="none" stroke="#333" stroke-width="1.200" stroke-dasharray="2.200 1.300"/>
 <path d="M27.500 123.800v2.200h-2.200z" fill="#222"/>
 <!-- polygon lasso -->
 <path d="M12.500 130.500l4.500 3.500 6.500-4-1.500 8.500-5-2-2 3.500z" fill="#e6e6e6" stroke="#444" stroke-width="1.300" stroke-linejoin="round"/>
 <path d="M27.500 140.800v2.200h-2.200z" fill="#222"/>
 <!-- quick selection / wand -->
 <circle cx="16.500" cy="150.500" r="3.600" fill="none" stroke="#777" stroke-width="1.100" stroke-dasharray="1.600 1.200"/>
 <path d="M18 152.500l7 7" stroke="#333" stroke-width="2.200" stroke-linecap="round"/><path d="M17.500 152l3 3" stroke="#888" stroke-width="2.600" stroke-linecap="round"/>
 <!-- crop -->
 <path d="M15 165v9.500h9M12.500 167.500h9v9" fill="none" stroke="#333" stroke-width="1.600"/>
 <path d="M27.500 176.800v2.200h-2.200z" fill="#222"/>
 <!-- eyedropper -->
 <path d="M13 194.500l1-3 5.500-5.500 2 2-5.500 5.500z" fill="#eee" stroke="#444" stroke-width="1"/><path d="M19 185l4.500-2.500 1 1-2.500 4.500z" fill="#333" stroke="#333"/>
 <path d="M27.500 193.800v2.200h-2.200z" fill="#222"/>
 <rect x="8" y="199.500" width="21" height="1" fill="#b9b9b9"/><rect x="8" y="200.500" width="21" height="1" fill="#e6e6e6"/>
 <!-- healing -->
 <g transform="rotate(-40 18 210)"><rect x="10.500" y="206.800" width="15" height="6.400" rx="3" fill="#9a9a9a" stroke="#555" stroke-width="1"/><rect x="15" y="206.800" width="6" height="6.400" fill="#e8e8e8" stroke="#666" stroke-width=".7"/></g>
 <circle cx="13.500" cy="206.500" r="2.700" fill="#f2f2f2" stroke="#ccc" stroke-width=".5"/>
 <path d="M27.500 213.800v2.200h-2.200z" fill="#222"/>
 <!-- brush -->
 <path d="M25.500 222l-7 6.500" stroke="#6a6a6a" stroke-width="2.600" stroke-linecap="round"/><path d="M19.500 227.500q0 5-8.500 5.500q2.500-2.500 3.500-6q2-2 5 .5z" fill="#2e2e2e"/>
 <path d="M27.500 231.800v2.200h-2.200z" fill="#222"/>
 <!-- stamp -->
 <path d="M16 238.500h4l-.5 5.500h5v3h-13v-3h5z" fill="#555" stroke="#333" stroke-width=".8"/><rect x="11.500" y="248.500" width="13" height="2" fill="#444"/>
 <path d="M27.500 249.800v2.200h-2.200z" fill="#222"/>
 <!-- history brush -->
 <path d="M25 257.500l-6.500 6" stroke="#6a6a6a" stroke-width="2.400" stroke-linecap="round"/><path d="M19 263q0 4.500-7.500 5q2.500-2.500 3-5.500q2-1.500 4.500 .5z" fill="#2e2e2e"/><path d="M12 260a4 4 0 0 1 7-1.500" fill="none" stroke="#444" stroke-width="1.200"/><path d="M11 257.500l.5 3.500 3-1z" fill="#444"/>
 <path d="M27.500 267.800v2.200h-2.200z" fill="#222"/>
 <!-- eraser -->
 <path d="M11.500 283l8-7.500h6l-8 7.500z" fill="#8a8a8a" stroke="#444" stroke-width=".9"/><path d="M11.500 283v3h6l8-7.500v-3l-8 7.500z" fill="#555" stroke="#444" stroke-width=".7"/>
 <path d="M27.500 285.800v2.200h-2.200z" fill="#222"/>
 <!-- bucket -->
 <path d="M13 297.500l6-4.500 4.500 6-6.500 4.500q-3.500-1.500-4-6z" fill="#777" stroke="#333" stroke-width="1"/><path d="M15 296q-1-6 3-5.500q2.500.5 1.500 5" fill="none" stroke="#333" stroke-width="1.100"/><path d="M23.500 299q3 3 1.500 6q-2.500-1-1.500-6z" fill="#222"/>
 <path d="M27.500 303.800v2.200h-2.200z" fill="#222"/>
 <!-- blur drop -->
 <path d="M18 311.500q5.500 6.500 4 10q-1.500 3-4 3q-2.500 0-4-3q-1.500-3.500 4-10z" fill="#9b9b9b" stroke="#666" stroke-width=".9"/><path d="M16 319q-.5 2 1.500 3.500" stroke="#e0e0e0" stroke-width="1.100" fill="none"/>
 <path d="M27.500 322.800v2.200h-2.200z" fill="#222"/>
 <!-- dodge -->
 <circle cx="15.800" cy="334.800" r="4.300" fill="#3a3a3a"/><path d="M18.500 337.500l6 6" stroke="#333" stroke-width="1.900" stroke-linecap="round"/><circle cx="14.500" cy="333.500" r="1.300" fill="#777"/>
 <path d="M27.500 341.800v2.200h-2.200z" fill="#222"/>
 <rect x="8" y="347" width="21" height="1" fill="#b9b9b9"/><rect x="8" y="348" width="21" height="1" fill="#e6e6e6"/>
 <!-- pen -->
 <path d="M12 363.500l2-6.500 5-4.500 4 4-4.500 5z" fill="#e8e8e8" stroke="#333" stroke-width="1.200" stroke-linejoin="round"/><path d="M12 363.500l5-5" stroke="#333" stroke-width=".9"/><path d="M19.500 351.500l2-2 4.500 4.500-2 2z" fill="#333"/><circle cx="17.300" cy="358.300" r="1.100" fill="#333"/>
 <path d="M27.500 361.800v2.200h-2.200z" fill="#222"/>
 <!-- type -->
 <text x="15" y="381.500" font-family="Liberation Serif" font-size="14.500" font-weight="bold" fill="#333">T</text><path d="M13 369v11M11.200 378.500l1.800 2.300 1.800-2.300z" stroke="#333" stroke-width="1" fill="#333"/>
 <path d="M27.500 379.800v2.200h-2.200z" fill="#222"/>
 <!-- path selection arrow -->
 <path d="M14.500 385.500v12l3-2.800 2.300 5 2-1-2.300-4.800h4z" fill="#333"/>
 <path d="M27.500 398.800v2.200h-2.200z" fill="#222"/>
 <!-- custom shape -->
 <path d="M13 406.500q3-2 5 .5q2.500-3 5-.5q2 2.500-1 4q3.500 2 1 4.500q-2.500 2-4.500-.5q-1 3.500-4 2q-2.500-1.500-.5-4q-3.500 0-3.500-2.500q.5-2.500 3.500-2q-1.500-.5-1-1.500z" fill="#8a8a8a" stroke="#4a4a4a" stroke-width="1"/>
 <path d="M27.500 416.800v2.200h-2.200z" fill="#222"/>
 <rect x="8" y="420.500" width="21" height="1" fill="#b9b9b9"/><rect x="8" y="421.500" width="21" height="1" fill="#e6e6e6"/>
 <!-- 3D rotate -->
 <circle cx="17" cy="430.500" r="3.800" fill="#e4e4e4" stroke="#444" stroke-width="1.100"/><path d="M11 430q-1.500 5 6 6.500q6 .5 7.500-2.500" fill="none" stroke="#444" stroke-width="1.300"/><path d="M24 430.500l2 4-4 .5z" fill="#444"/>
 <path d="M27.500 435.800v2.200h-2.200z" fill="#222"/>
 <!-- 3D orbit -->
 <ellipse cx="17.500" cy="450.500" rx="6.500" ry="3.600" fill="none" stroke="#444" stroke-width="1.300" transform="rotate(18 17.500 450.500)"/><path d="M21.500 446l4.500-1M14.500 455.500l-3-3 4-.5z" stroke="#444" stroke-width="1.300" fill="#444"/>
 <path d="M27.500 455.800v2.200h-2.200z" fill="#222"/>
 <!-- hand -->
 <path d="M14.500 474q-2.500-3.500-3.500-6q1-1.500 2.500.5l1 1v-6q1-1.200 1.800 0v-1q1-1.200 1.900 0v1q1-1 1.900.2v1.300q1.200-.8 1.800.5v5q0 2.500-1.500 3.500z" fill="#f0f0f0" stroke="#333" stroke-width="1"/>
 <path d="M27.500 472.800v2.200h-2.200z" fill="#222"/>
 <!-- zoom -->
 <circle cx="16.500" cy="484.500" r="3.900" fill="#e9e9e9" stroke="#444" stroke-width="1.300"/><path d="M19.500 487.500l4 4" stroke="#444" stroke-width="2" stroke-linecap="round"/>
 <!-- default/swap -->
 <rect x="9" y="499.500" width="5.500" height="5.500" fill="#fff" stroke="#333" stroke-width=".8"/><rect x="7" y="497.500" width="5.500" height="5.500" fill="#111" stroke="#111" stroke-width=".8"/>
 <path d="M21 500.500q1-2.500 4-1.500M26 502.500q0 2-2 2.500" fill="none" stroke="#333" stroke-width="1.100"/><path d="M20 502l1.200-2.800 1.800 2.400zM27.500 501.500l-1.500 2.700-1.700-2.700z" fill="#333"/>
 <!-- fg/bg -->
 <rect x="15" y="518.500" width="13.500" height="14.500" fill="#000"/>
 <rect x="6" y="510.500" width="16.500" height="15.500" fill="#fff" stroke="#e8e8e8" stroke-width=".6"/>
 <!-- quick mask -->
 <rect x="11" y="539" width="13" height="9" fill="#f4f4f4" stroke="#333" stroke-width="1"/><circle cx="17.500" cy="543.500" r="2.800" fill="#e0e0e0" stroke="#555" stroke-width=".9"/>
</svg>


<!-- ===== dock strip icons ===== -->
<svg class="a" style="left:0;top:0" width="1000" height="594" viewBox="0 0 1000 594">
 <rect x="780" y="84" width="18" height="1" fill="#b4b4b4"/><rect x="780" y="85" width="18" height="1" fill="#e8e8e8"/>
 <!-- history -->
 <g fill="#f4f4f4" stroke="#555" stroke-width=".9"><rect x="784" y="95" width="3.500" height="3.300"/><rect x="784" y="99.500" width="3.500" height="3.300"/></g><rect x="783.700" y="104" width="4.200" height="3.500" fill="#666"/>
 <path d="M789.500 97q5.500-1 5 4.500q-.5 3.500-4 5" fill="none" stroke="#444" stroke-width="1.800"/><path d="M788 97l3.800-2.500v5z" fill="#444"/>
 <!-- actions -->
 <rect x="782.500" y="119.500" width="14" height="10" fill="#f2f2f2" stroke="#555" stroke-width="1.100"/><path d="M785.500 121v7l8-3.500z" fill="#444"/>
 <rect x="776" y="137" width="26" height="1" fill="#5a5a5a"/><rect x="776" y="138" width="26" height="1" fill="#e6e6e6"/><rect x="780" y="142" width="18" height="1" fill="#b4b4b4"/><rect x="780" y="143" width="18" height="1" fill="#e8e8e8"/>
 <!-- wheel -->
 <circle cx="789" cy="158.500" r="3.400" fill="none" stroke="#444" stroke-width="1.300"/><path d="M789 151v15M781.500 158.500h15M783.700 153.200l10.600 10.600M794.300 153.200l-10.600 10.600" stroke="#444" stroke-width="1.200"/><circle cx="789" cy="158.500" r="1.300" fill="#444"/>
 <!-- histogram -->
 <rect x="782.500" y="176.500" width="14" height="10.500" fill="#f2f2f2" stroke="#555" stroke-width="1"/><path d="M783 186.500v-3l1.500-2 1 1.500 1.500-4 1 3 1.500-3.500 1 2.500 1.500-1.500 1 2 1.500-2v7z" fill="#333"/>
 <!-- info -->
 <circle cx="789" cy="205.500" r="6.300" fill="#4d4d4d" stroke="#333" stroke-width=".8"/><path d="M789 204v5" stroke="#fff" stroke-width="2"/><circle cx="789" cy="201.800" r="1.100" fill="#fff"/><path d="M787.500 209h3M787.500 204h1.500" stroke="#fff" stroke-width="1"/>
 <rect x="776" y="219" width="26" height="1" fill="#5a5a5a"/><rect x="776" y="220" width="26" height="1" fill="#e6e6e6"/><rect x="780" y="224" width="18" height="1" fill="#b4b4b4"/><rect x="780" y="225" width="18" height="1" fill="#e8e8e8"/>
 <!-- brush presets -->
 <path d="M787 236h9" stroke="#555" stroke-width="1.600"/><ellipse cx="785" cy="236" rx="3.600" ry="2.200" fill="#2c2c2c"/>
 <path d="M781.500 241.500h9" stroke="#555" stroke-width="1.600"/><ellipse cx="793" cy="242" rx="3" ry="3" fill="#444"/>
 <!-- brush cup -->
 <rect x="785.500" y="262" width="7.500" height="6.500" fill="#f4f4f4" stroke="#222" stroke-width="1.800"/>
 <path d="M787 261l-2-4.500M789.300 261v-6M791.500 261l2.500-4" stroke="#333" stroke-width="1.500"/><circle cx="794.500" cy="257" r="1.600" fill="#222"/>
 <!-- clone source -->
 <path d="M788.500 281.500h4l-.5 4.500h4v3h-11v-3h4z" fill="#444"/><rect x="784.500" y="290.500" width="11.500" height="2" fill="#333"/><path d="M781 280.500h3M781 283h3M781 285.500h3" stroke="#555" stroke-width="1"/>
 <rect x="776" y="299" width="26" height="1" fill="#5a5a5a"/><rect x="776" y="300" width="26" height="1" fill="#e6e6e6"/><rect x="780" y="304" width="18" height="1" fill="#b4b4b4"/><rect x="780" y="305" width="18" height="1" fill="#e8e8e8"/>
 <!-- paragraph -->
 <path d="M789.500 315.500h4M792 315.500v10.500M789.500 315.500v10.500" stroke="#333" stroke-width="1.300"/><path d="M789.500 315q-4.500 0-4.500 3.300q0 3.200 4.500 3.200z" fill="#333"/>
 <rect x="776" y="334" width="26" height="1" fill="#5a5a5a"/><rect x="776" y="335" width="26" height="1" fill="#e6e6e6"/><rect x="780" y="339" width="18" height="1" fill="#b4b4b4"/><rect x="780" y="340" width="18" height="1" fill="#e8e8e8"/>
 <!-- tools -->
 <path d="M783 359.500l10.500-10.500" stroke="#222" stroke-width="2.200" stroke-linecap="round"/><path d="M783.500 349l10.500 10.500" stroke="#222" stroke-width="1.600"/><path d="M782 348l3.500.5-.5 3.500z" fill="#222"/><circle cx="793.500" cy="349.500" r="1.800" fill="#222"/>
 <!-- 3D cube -->
 <path d="M784.500 378l4.500-2 4.500 2v4l-4.500 2.300-4.500-2.300z" fill="#333"/><path d="M784.500 378l4.500 2 4.500-2-4.500-2z" fill="#eee" stroke="#333" stroke-width=".7"/><path d="M789 371v5" stroke="#333" stroke-width="1"/>
 <rect x="776" y="392" width="26" height="1" fill="#5a5a5a"/><rect x="776" y="393" width="26" height="1" fill="#e6e6e6"/><rect x="780" y="396" width="18" height="1" fill="#b4b4b4"/><rect x="780" y="397" width="18" height="1" fill="#e8e8e8"/>
 <!-- character -->
 <text x="783.500" y="418" font-family="Liberation Sans" font-size="12.500" fill="#222">A</text><rect x="793" y="407" width="1.200" height="12" fill="#222"/>
</svg>

</body></html>
